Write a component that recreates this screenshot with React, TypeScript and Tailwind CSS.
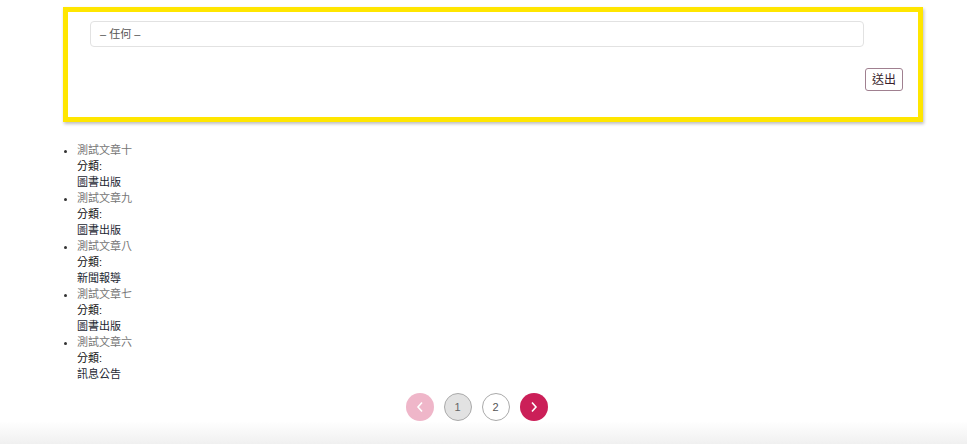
const posts = [
  { title: '測試文章十', category: '圖書出版' },
  { title: '測試文章九', category: '圖書出版' },
  { title: '測試文章八', category: '新聞報導' },
  { title: '測試文章七', category: '圖書出版' },
  { title: '測試文章六', category: '訊息公告' },
];

const font = { fontFamily: '"Liberation Sans", "Noto Sans CJK TC", sans-serif' };

export default function App() {
  return (
    <div className="min-h-[444px] bg-white flex flex-col" style={font}>
      <div className="ml-[63px] mt-[7px] w-[860px] h-[115px] border-[5px] border-[#ffe600] bg-white shadow-[1px_2px_3px_rgba(0,0,0,0.25)] pt-[9px] pl-[22px] pr-[15px] flex flex-col">
        <div className="w-[774px] h-[26px] border border-[#e2e2e2] rounded-[4px] flex items-center pl-[9px] text-[11px] text-[#555]">
          – 任何 –
        </div>
        <div className="flex justify-end mt-[21px]">
          <button className="h-[23px] w-[38px] border border-[#a08090] rounded-[3px] bg-white text-[12px] text-[#3a1f2c] leading-none">
            送出
          </button>
        </div>
      </div>

      <ul className="list-disc ml-[63px] pl-[14px] mt-[20px] text-[11px] leading-[16px] marker:text-[#333]">
        {posts.map((p) => (
          <li key={p.title} className="h-[48px]">
            <span className="text-[#767676]">{p.title}</span>
            <div className="text-[#111]">分類:</div>
            <div className="text-[#1c2733]">{p.category}</div>
          </li>
        ))}
      </ul>

      <div className="flex justify-center gap-[10px] mt-[11px] pr-[14px]">
        <button className="w-[28px] h-[28px] rounded-full bg-[#efb6c9] flex items-center justify-center">
          <svg width="10" height="12" viewBox="0 0 10 12" fill="none" stroke="white" strokeWidth="1.6">
            <path d="M7 1.5 L3 6 L7 10.5" />
          </svg>
        </button>
        <button className="w-[28px] h-[28px] rounded-full bg-[#e2e2e2] border border-[#aaa] text-[11px] text-[#666] flex items-center justify-center">
          1
        </button>
        <button className="w-[28px] h-[28px] rounded-full bg-white border border-[#aaa] text-[11px] text-[#555] flex items-center justify-center">
          2
        </button>
        <button className="w-[28px] h-[28px] rounded-full bg-[#cb1f58] flex items-center justify-center">
          <svg width="10" height="12" viewBox="0 0 10 12" fill="none" stroke="white" strokeWidth="1.6">
            <path d="M3 1.5 L7 6 L3 10.5" />
          </svg>
        </button>
      </div>

      <div className="flex-1 min-h-[23px] bg-gradient-to-b from-white to-[#f0f0f0]" />
    </div>
  );
}
